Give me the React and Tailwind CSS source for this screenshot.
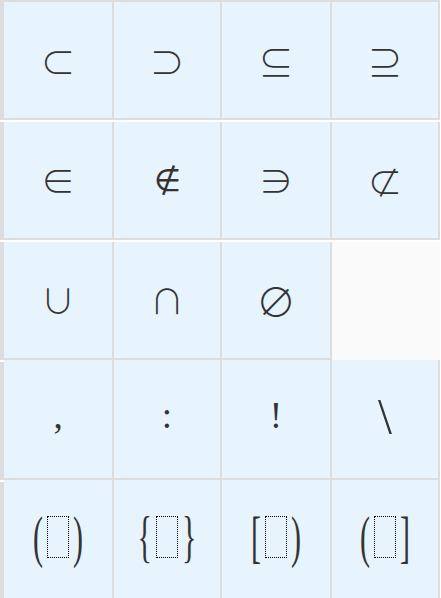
const rows = [
  {
    kind: 'set',
    cells: [
      ['⊂', 'text-[35px]'],
      ['⊃', 'text-[35px]'],
      ['⊆', 'text-[35px]'],
      ['⊇', 'text-[35px]'],
    ],
  },
  {
    kind: 'set',
    cells: [
      ['∈', 'text-[34px]'],
      ['∉', 'text-[31px]', true],
      ['∋', 'text-[34px]'],
      ['⊄', 'text-[35px]'],
    ],
  },
  {
    kind: 'set',
    cells: [
      ['∪', 'text-[34px]'],
      ['∩', 'text-[34px]'],
      ['∅', 'text-[40px]'],
      null,
    ],
  },
  {
    kind: 'punct',
    cells: [
      [',', 'text-[37px]'],
      [':', 'text-[37px]'],
      ['!', 'text-[37px]'],
      ['\\', 'text-[50px]'],
    ],
  },
  {
    kind: 'bracket',
    cells: [
      ['(', ')'],
      ['{', '}'],
      ['[', ')'],
      ['(', ']'],
    ],
  },
];

const widths = ['w-[110px]', 'w-[108px]', 'w-[110px]', 'w-[108px]'];

function Placeholder() {
  return <span className="inline-block w-[22px] h-[42px] border border-dotted border-black mx-[4px]" />;
}

function Glyph({ kind, value }) {
  if (kind === 'bracket') {
    return (
      <span className="flex items-center mb-[5px] text-[#333] font-['Liberation_Serif',serif] text-[30px] leading-none">
        <span className="inline-block scale-y-[1.9]">{value[0]}</span>
        <Placeholder />
        <span className="inline-block scale-y-[1.9]">{value[1]}</span>
      </span>
    );
  }
  if (kind === 'punct') {
    return (
      <span className={`mb-[7px] text-[#333] font-['Liberation_Serif',serif] leading-none ${value[1]}`}>
        {value[0]}
      </span>
    );
  }
  // DejaVu's light ∉ has the slanted stroke, Noto CJK's is upright
  if (value[2]) {
    return (
      <span className={`text-[#333] font-['DejaVu_Sans',sans-serif] font-extralight leading-none ${value[1]}`}>
        {value[0]}
      </span>
    );
  }
  return (
    <span className={`text-[#333] font-['Noto_Sans_CJK_JP','DejaVu_Sans',sans-serif] font-light leading-none ${value[1]}`}>
      {value[0]}
    </span>
  );
}

function Row({ row, index }) {
  const gapAfter = index < 2;
  const stripGap = index > 2;
  const height = index > 2 ? 'h-[120px]' : 'h-[118px]';
  return (
    <div className={`flex ${gapAfter ? 'mb-[2px]' : ''}`}>
      <div className={`w-[4px] shrink-0 bg-[#dddddd] ${stripGap ? 'border-t-2 border-white' : ''}`} />
      {row.cells.map((value, i) =>
        value === null ? (
          <div key={i} className={`${widths[i]} h-[118px] bg-[#fafafa]`} />
        ) : (
          <div
            key={i}
            className={`${widths[i]} ${height} shrink-0 flex items-center justify-center bg-[#e7f3fd] border-r-2 border-b-2 border-[#dddddd]`}
          >
            <Glyph kind={row.kind} value={value} />
          </div>
        )
      )}
    </div>
  );
}

export default function App() {
  return (
    <div className="w-[441px] h-[598px] overflow-hidden bg-white">
      <div className="w-[440px] h-[2px] bg-[#dddddd]" />
      {rows.map((row, i) => (
        <Row key={i} row={row} index={i} />
      ))}
    </div>
  );
}
